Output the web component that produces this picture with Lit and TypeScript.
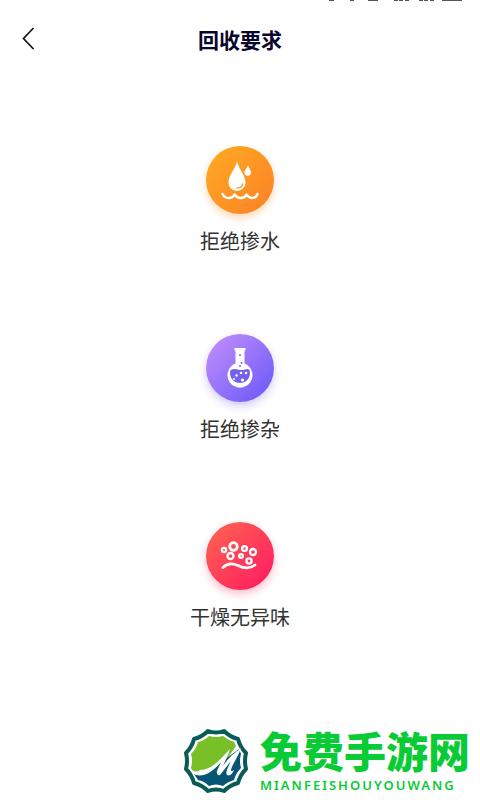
import { LitElement, html, css, svg } from "lit";
import { customElement } from "lit/decorators.js";

const drops = svg`
  <path d="M31 15C32.500 23 39.500 29 39.500 36.500A8.500 8.500 0 0 1 22.500 36.500C22.500 29 29.500 23 31 15Z" fill="#fff"/>
  <path d="M36.500 38Q36 42 31 42" fill="none" stroke="#fd9426" stroke-width="1.500" stroke-linecap="round"/>
  <path d="M42 19C42.500 22 45 24 45 26.500A3.300 3.300 0 0 1 38.400 26.500C38.400 24 41.500 22 42 19Z" fill="#fff"/>
  <path d="M16.500 48Q18.500 52 22.500 52Q27 52 28.500 48.500Q31 52 34.500 52Q39 52 40.500 48.500Q43 52 46 52Q50 52 51.500 48" fill="none" stroke="#fff" stroke-width="2.400" stroke-linecap="round" stroke-linejoin="round"/>`;

const flask = svg`
  <path d="M28 14H40L38.500 17.500V29.500A12.500 12.500 0 1 1 29.500 29.500V17.500Z" fill="#fff"/>
  <path d="M24.500 36Q28 34.500 32 35.500Q36 36.500 39 35.500Q42 34.500 43.500 36A10 10 0 1 1 24.500 36Z" fill="#7561ed"/>
  <g fill="#7561ed"><circle cx="34" cy="21" r="1"/><circle cx="35.500" cy="29" r="1"/><circle cx="34" cy="32" r="1"/></g>
  <g fill="#fff"><circle cx="35" cy="39" r="1.300"/><circle cx="40" cy="39" r="1.300"/><circle cx="30.500" cy="41.500" r="1.200"/><circle cx="28" cy="45" r="1"/><circle cx="36.500" cy="46" r="1.600"/></g>`;

const particles = svg`
  <g fill="none" stroke="#fff" stroke-width="2.300">
    <circle cx="18" cy="28" r="2.100"/><circle cx="27.500" cy="24.500" r="3.800" stroke-width="2.700"/><circle cx="38.500" cy="26.500" r="2.400"/>
    <circle cx="47" cy="30" r="3"/><circle cx="24.500" cy="34" r="3"/><circle cx="35" cy="34" r="1.900"/><circle cx="43" cy="39" r="2.600"/>
  </g>
  <path d="M17 45.500Q23 39.500 32 43.500Q42 48.500 49 43" fill="none" stroke="#fff" stroke-width="2.600" stroke-linecap="round"/>`;

const rules = [
  { kind: "water", text: "拒绝掺水", art: drops },
  { kind: "mixed", text: "拒绝掺杂", art: flask },
  { kind: "dry", text: "干燥无异味", art: particles },
];

@customElement("app-root")
export class AppRoot extends LitElement {
  static styles = css`
    :host { display: flex; flex-direction: column; position: relative; min-height: 100vh; overflow: hidden; background: #fff; color: #333; font-family: "Noto Sans CJK SC", sans-serif; }
    .clipped { position: absolute; top: 0; right: 16px; width: 136px; height: 2px; }
    header { display: grid; grid-template-columns: 64px 1fr 64px; align-items: center; height: 78px; }
    .back { display: flex; align-items: center; width: 40px; height: 40px; margin-left: 16px; padding: 0; border: 0; background: none; cursor: pointer; }
    h1 { margin: 0; text-align: center; font-size: 21px; line-height: 32px; font-weight: 700; color: #08062b; }
    ul { display: flex; flex-direction: column; gap: 78px; margin: 0; padding: 68px 0 0; list-style: none; }
    li { display: flex; flex-direction: column; align-items: center; gap: 12px; font-size: 20px; line-height: 30px; }
    .badge { width: 68px; height: 68px; border-radius: 50%; }
    .badge svg { display: block; }
    .water { background: linear-gradient(135deg, #ffab22, #fb8126); box-shadow: 0 4px 8px #fb902655; }
    .mixed { background: linear-gradient(135deg, #c791ff, #6656f6); box-shadow: 0 4px 8px #7566f655; }
    .dry { background: linear-gradient(135deg, #ff674f, #ff1763); box-shadow: 0 4px 8px #ff356055; }
    footer { display: flex; justify-content: flex-end; align-items: flex-end; gap: 10px; margin-top: auto; padding: 0 10px 6px 0; }
    .brand { display: flex; flex-direction: column; color: #09cb35; }
    .name { font-size: 42px; line-height: 52px; font-weight: 900; }
    .latin { font-family: "Noto Sans", sans-serif; font-size: 13px; line-height: 18px; font-weight: 600; letter-spacing: 2px; }
  `;

  render() {
    return html`
      <svg class="clipped" viewBox="0 0 136 2" aria-hidden="true"><path d="M1 0h5v1h-5zM22 0h4v1h-4zM40 0h10v1h-10zM66 0h4v1h-4zM71 0h4v1h-4zM77 0h4v1h-4zM91 0h4v1h-4zM96 0h4v1h-4zM102 0h4v1h-4zM114 0h20v1h-20z" fill="#555"/></svg>
      <header>
        <button class="back" aria-label="返回"><svg width="24" height="32" viewBox="0 0 24 32"><path d="M17.500 5L7.500 15.500L17.500 26" fill="none" stroke="#111" stroke-width="1.700"/></svg></button>
        <h1>回收要求</h1>
      </header>
      <main><ul>${rules.map(r => html`<li><div class="badge ${r.kind}"><svg width="68" height="68" viewBox="0 0 68 68" aria-hidden="true">${r.art}</svg></div><span>${r.text}</span></li>`)}</ul></main>
      <footer>
        <svg width="68" height="66" viewBox="0 0 68 66" aria-hidden="true">
          <path d="M26 3Q34 6 42 3Q48 9 56 11Q58 19 64 25Q62 33 64 41Q58 47 56 55Q48 57 42 63Q34 60 26 63Q20 57 12 55Q10 47 4 41Q6 33 4 25Q10 19 12 11Q20 9 26 3Z" fill="#fff" stroke="#075d55" stroke-width="4" stroke-linejoin="round"/>
          <path d="M27 8Q34 10 41 8Q46 12 52 14L54 18L45 31L30 43L11 44L9 40Q11 33 9 26Q14 21 16 14Q22 13 27 8Z" fill="#79bf28"/>
          <path d="M57 21L59 26Q57 33 59 40Q54 45 52 52Q45 54 41 58Q34 55 27 58Q22 53 16 52L12 46Q24 49 34 38Z" fill="#075575"/>
          <path d="M10 42Q14 45 18 42C29 42 37 33 48 21C46 28 43 33 41 38C46 30 52 25 59 20C56 29 50 37 49 42Q49 44 52 42Q49 49 45 47C43 45 46 39 49 33L38 47Q34 48 35 43L39 34C30 45 21 49 14 47Q10 45 10 42Z" fill="#fff"/>
        </svg>
        <div class="brand"><span class="name">免费手游网</span><span class="latin">MIANFEISHOUYOUWANG</span></div>
      </footer>`;
  }
}
